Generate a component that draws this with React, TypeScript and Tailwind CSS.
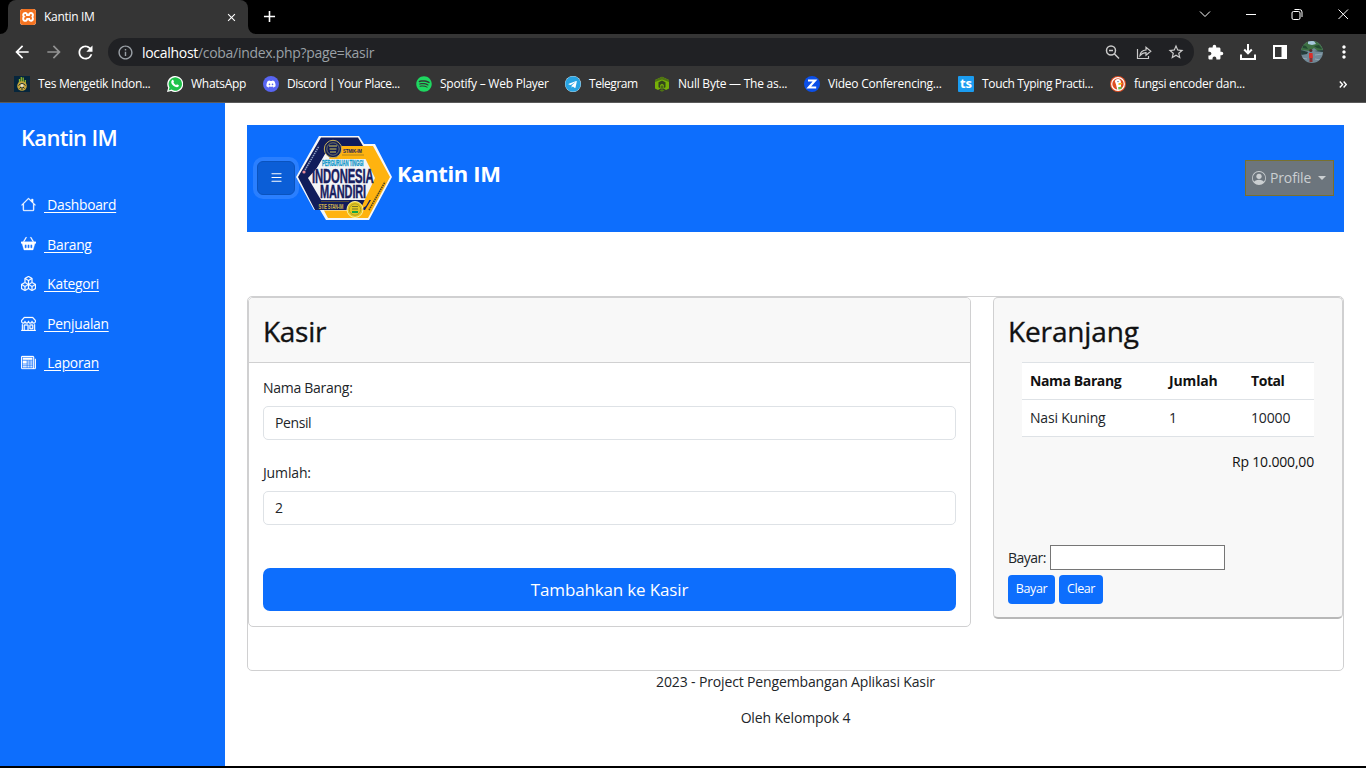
import React from "react";
import { BsHouse, BsBasket2Fill, BsBoxes, BsShop, BsNewspaper, BsPersonCircle, BsList } from "react-icons/bs";
import { MdArrowBack, MdArrowForward, MdRefresh, MdInfoOutline, MdStarBorder, MdExtension, MdMoreVert, MdClose, MdAdd } from "react-icons/md";
import { FaDiscord, FaSpotify, FaTelegram } from "react-icons/fa";
import { SiXampp } from "react-icons/si";

function WhatsAppIcon() {
  return (
    <svg viewBox="0 0 16 16" className="h-4 w-4 shrink-0">
      <path d="M0 16 1.2 11.8A8 8 0 1 1 4.2 14.9Z" fill="#fff" />
      <path d="M1.6 14.4 2.5 11.4A6.7 6.7 0 1 1 4.6 13.6Z" fill="#1fc24a" />
      <path d="M5.2 4.1c.4-.4.9-.4 1.1 0l.6 1.3c.1.3 0 .6-.5 1.2.6 1.2 1.5 2 2.7 2.6.6-.8.8-.9 1.1-.8l1.4.7c.4.2.3.9-.1 1.4-.7.8-1.9.9-3.3.3-2-.9-3.5-2.6-3.9-4.1-.2-1 .2-1.9.9-2.6z" fill="#fff" />
    </svg>
  );
}
function TypingIcon() {
  return (
    <svg viewBox="0 0 16 16" className="h-4 w-4 shrink-0">
      <rect width="16" height="16" fill="#06263c" />
      <path d="M5.500 3v5M7.300 1v6M9.200 1.500v6M11.300 4v4" stroke="#8bb52c" strokeWidth="1.300" />
      <circle cx="8" cy="10" r="4.800" fill="#c5a53a" />
      <path d="M4.500 9.500Q8 5.500 11.500 9.500M5.500 12.500 8 10l2.500 2.500M8 10v4" stroke="#16303a" fill="none" />
      <circle cx="8" cy="9.400" r="1.500" fill="#e8e4cf" />
    </svg>
  );
}
function NullByteIcon() {
  return (
    <svg viewBox="0 0 16 16" className="h-4 w-4 shrink-0">
      <path d="M8 .8 15 4v8.500L12 14 9.500 12.500h-3L4 14l-3-1.500V4Z" fill="#76b008" />
      <path d="M8 .8 15 4v2L8 3.500 1 6V4Z" fill="#4f7412" />
      <path d="M8 4.500 11.500 6.300v5L10 12V9L8 7.800 6 9v3l-1.500-.7v-5Z" fill="#33451c" />
      <path d="M6.500 9.500h3V12h-3z" fill="#4a6a18" />
      <path d="M5.500 14.500 8 13l2.500 1.500L8 15.800Z" fill="#4f7412" />
    </svg>
  );
}
function DuckIcon() {
  return (
    <svg viewBox="0 0 16 16" className="h-4 w-4 shrink-0">
      <circle cx="8" cy="8" r="8" fill="#de4d22" />
      <circle cx="8" cy="8" r="6.300" fill="#de4d22" stroke="#fff" strokeWidth="1.200" />
      <path d="M4.800 5Q6 2.500 8.500 3 11.300 3.800 11 7.500L11 13.500 7.300 14 6 8.500Z" fill="#fff" />
      <path d="M8.500 7.200q2-.8 4 0-1 2-4 1.800z" fill="#fdb813" />
      <path d="M8 11.300l3.500-.8v2.500l-3 .5z" fill="#65bc46" />
      <circle cx="8" cy="5.600" r=".7" fill="#2d4f8e" />
    </svg>
  );
}
function Bookmarks() {
  const item = "flex shrink-0 items-center whitespace-nowrap";
  return (
    <div className="flex h-[35px] items-center border-b border-[#5a5a5a] bg-[#353535] pl-[14px] pb-[2px] text-[12px] text-white">
      <div className={`${item} w-[153px] gap-2`}><TypingIcon /><span className="tracking-[-0.32px]">Tes Mengetik Indon...</span></div>
      <div className={`${item} w-[96px] gap-2`}><WhatsAppIcon /><span className="tracking-[-0.28px]">WhatsApp</span></div>
      <div className={`${item} w-[153px] gap-2`}>
        <span className="flex h-4 w-4 items-center justify-center rounded-full bg-[#5865f2]"><FaDiscord size={10} /></span>
        <span className="tracking-[-0.48px]">Discord | Your Place...</span>
      </div>
      <div className={`${item} w-[149px] gap-2`}><FaSpotify size={16} color="#1ed760" /><span className="tracking-[-0.24px]">Spotify – Web Player</span></div>
      <div className={`${item} w-[89px] gap-2`}>
        <span className="rounded-full bg-white"><FaTelegram size={16} color="#27a3e2" /></span><span className="tracking-[-0.45px]">Telegram</span>
      </div>
      <div className={`${item} w-[150px] gap-2`}><NullByteIcon /><span className="tracking-[-0.24px]">Null Byte — The as...</span></div>
      <div className={`${item} w-[154px] gap-2`}>
        <svg viewBox="0 0 16 16" className="h-4 w-4"><circle cx="8" cy="8" r="8" fill="#0b4fe8" /><path d="M4 4.500h7L4.800 11.500h7.400" fill="none" stroke="#fff" strokeWidth="2.200" /></svg>
        <span className="tracking-[-0.24px]">Video Conferencing...</span>
      </div>
      <div className={`${item} w-[152px] gap-2`}>
        <span className="flex h-4 w-4 items-center justify-center rounded-[1px] bg-[#1b9cf0] pb-px text-[13px] leading-none font-bold">ts</span>
        <span className="tracking-[-0.35px]">Touch Typing Practi...</span>
      </div>
      <div className={`${item} gap-2`}><DuckIcon /><span className="tracking-[-0.3px]">fungsi encoder dan...</span></div>
      <svg viewBox="0 0 8 7" className="mr-[19px] ml-auto h-[7px] w-2" fill="none" stroke="#fff" strokeWidth="1.400"><path d="M.8.6 3.500 3.500.8 6.400M4.600.6 7.300 3.500 4.600 6.400" /></svg>
    </div>
  );
}
function Browser() {
  return (
    <header className="h-[103px] shrink-0 bg-[#353535] text-white">
      <div className="flex h-[34px] bg-black">
        <svg viewBox="0 0 8 34" className="h-[34px] w-2"><path d="M8 26v8H0a8 8 0 0 0 8-8" fill="#353535" /></svg>
        <div className="flex w-[240px] items-center rounded-t-lg bg-[#353535] pl-3 text-[12px]">
          <span className="flex h-4 w-4 items-center justify-center overflow-hidden rounded-[3px] bg-white"><SiXampp size={16} color="#f47321" /></span>
          <span className="ml-2 tracking-[-0.3px]">Kantin IM</span>
          <MdClose size={13} className="mr-[10px] ml-auto" />
        </div>
        <svg viewBox="0 0 8 34" className="h-[34px] w-2"><path d="M0 26v8h8a8 8 0 0 1-8-8" fill="#353535" /></svg>
        <MdAdd size={19} className="mt-[7px] ml-1" />
        <svg viewBox="-10 0 170 34" className="ml-auto h-[34px] w-[170px]" fill="none" stroke="#fff" strokeWidth="1">
          <path d="m-6 11.500 5 5 5-5" />
          <path d="M40 14.500h10" />
          <path d="M87.500 11.500h5a1.500 1.500 0 0 1 1.500 1.500v5a1.500 1.500 0 0 1-1.500 1.500h-5A1.500 1.500 0 0 1 86 18v-5a1.500 1.500 0 0 1 1.500-1.500M88.500 9.500h5a2.500 2.500 0 0 1 2.500 2.500v5" />
          <path d="m132.500 9.500 9.500 9.500m0-9.500-9.500 9.500" />
        </svg>
      </div>
      <div className="flex h-[34px] items-center pt-0.5">
        <MdArrowBack size={20} className="ml-3" />
        <MdArrowForward size={20} className="ml-3 text-[#929292]" />
        <MdRefresh size={21} className="ml-[11px]" />
        <div className="ml-3 flex h-7 w-[1086px] items-center rounded-full bg-[#202124] pl-[9px] text-[14px] text-[#9aa0a6]">
          <MdInfoOutline size={17} />
          <span className="ml-2 tracking-[-0.3px]"><span className="text-white">localhost</span>/coba/index.php?page=kasir</span>
          <div className="mr-[9px] ml-auto flex items-center gap-[15px] text-[#cbcbcb]">
            <svg viewBox="0 0 16 16" className="h-4 w-4" fill="none" stroke="currentColor" strokeWidth="1.500"><circle cx="6" cy="6.500" r="4.500" /><path d="M9.300 9.800l4.700 4.700M4 6.500h4" /></svg>
            <svg viewBox="0 0 16 16" className="h-4 w-4" fill="none" stroke="currentColor" strokeWidth="1.200"><path d="M1.500 5v9.500h11V12M4 11.500q.5-5 6-5.500V3.200l4.800 4-4.800 4V8.600Q6.500 8.500 4 11.500Z" /></svg>
            <MdStarBorder size={18} />
          </div>
        </div>
        <MdExtension size={17} className="ml-[13px]" />
        <svg viewBox="0 0 16 16" className="ml-4 h-4 w-4" fill="none" stroke="#fff" strokeWidth="2"><path d="M8 0v9M4.200 5.500 8 9.300l3.800-3.800M1 10.500V15h14v-4.500" /></svg>
        <svg viewBox="0 0 14 14" className="ml-[17px] h-[14px] w-[14px]"><path d="M0 0h14v14H0z" fill="#fff" /><path d="M2 2h6.500v10H2z" fill="#353535" /></svg>
        <svg viewBox="0 0 22 22" className="ml-[14px] h-[22px] w-[22px]">
          <defs><clipPath id="avatar"><circle cx="11" cy="11" r="11" /></clipPath></defs>
          <g clipPath="url(#avatar)">
            <path d="M0 0h22v22H0z" fill="#718997" />
            <path d="M0 0h22v9l-5 1-4-3-4 3-9-1z" fill="#3e7043" />
            <path d="M7 0h6l2 3-4 1-4-1z" fill="#a7c8dc" />
            <path d="M1 4l4 1 2 3-5-1zM13 5l5-1 3 4-5-1z" fill="#234a32" />
            <path d="M0 9l7 2-1 2-6 1zM13 10l9-1v2z" fill="#253c3a" />
            <path d="M8 12h3.500l.5 5H8z" fill="#d92f2a" /><path d="M8.500 17h3v4h-3z" fill="#8a3032" />
            <circle cx="9.800" cy="9.500" r="1.600" fill="#4b2f2c" />
            <path d="M14 14l7-1M1 17l5 1M14 18l5 1" stroke="#93a8b4" />
          </g>
        </svg>
        <MdMoreVert size={20} className="ml-[11px]" />
      </div>
      <Bookmarks />
    </header>
  );
}
function Logo() {
  return (
    <svg viewBox="0 0 100 90" className="h-[90px] w-[100px]">
      <path d="M25 4H65L70 12H81L98 45 75 88H32L26 78H20L2 45Z" fill="#f6f7f8" />
      <path d="M27 5.500H64L69 14H43L38 22H31L17 46 28 68H80L76 78H21L4 45Z" fill="#101c5b" />
      <path d="M44 14H79L96 45 74 86H34L30 78.500H61L70 77 86 46 74 27H35L39 19Z" fill="#ffb30f" />
      <path d="M31 27H71L83 46 71 68H27L14 46Z" fill="#f3f4f6" />
      <path d="M27 68H77L71 78H25Z" fill="#101c5b" />
      <path d="M71 26H76L88 46 72 74 66 78 81 46Z" fill="#ffb30f" />
      <path d="M48 23H70M27 69.500H55" stroke="#7e6a25" strokeWidth=".6" />
      <circle cx="39" cy="17" r="8.700" fill="#111e58" stroke="#c9b257" strokeWidth="1" />
      <circle cx="39" cy="17" r="6.200" fill="none" stroke="#8f8a60" strokeWidth=".8" />
      <path d="M35 14h8M35.500 17h7M36 20h6" stroke="#d9c85b" strokeWidth="1" />
      <g fontFamily="'Liberation Sans', sans-serif" fontWeight="700">
        <text transform="translate(49 21) scale(1 1.4)" fontSize="4.400" fill="#17205a">STMIK-IM</text>
        <text transform="translate(28 34) scale(1 1.9)" fontSize="4.300" fill="#1598c9" stroke="#1598c9" strokeWidth=".15">PERGURUAN TINGGI</text>
        <text transform="translate(18 51) scale(1 1.8)" fontSize="11.300" fill="#18205f" stroke="#18205f" strokeWidth=".25">INDONESIA</text>
        <text transform="translate(26 66) scale(1 1.6)" fontSize="11" fill="#18205f" stroke="#18205f" strokeWidth=".25">MANDIRI</text>
        <text transform="translate(24.500 76.500) scale(1 1.85)" fontSize="4" fill="#d6b84c">STIE STAN-IM</text>
      </g>
      <circle cx="61" cy="77.500" r="8" fill="#e6c920" stroke="#fff0a0" strokeWidth="1" />
      <circle cx="61" cy="77.500" r="5.700" fill="none" stroke="#a28b25" strokeWidth=".8" />
      <path d="M58 74.500h6M58 77h6" stroke="#77742a" strokeWidth="1.200" /><path d="M58 80h6" stroke="#16a446" strokeWidth="2" />
      <path d="M11 38 25 14" stroke="#8fa0c4" strokeWidth="1.500" strokeDasharray="1.500 .8" /><circle cx="10" cy="40" r="1.600" fill="#e68c9a" />
      <path d="M75 78 91 50" stroke="#4e4521" strokeWidth="1.600" strokeDasharray="1.500 .8" />
    </svg>
  );
}
const menu = [
  { label: "Dashboard", Icon: BsHouse },
  { label: "Barang", Icon: BsBasket2Fill },
  { label: "Kategori", Icon: BsBoxes },
  { label: "Penjualan", Icon: BsShop },
  { label: "Laporan", Icon: BsNewspaper },
];
export default function App() {
  return (
    <div className="flex h-[768px] w-[1366px] flex-col overflow-hidden border-b-2 border-black bg-white font-['Open_Sans','Noto_Sans',sans-serif] text-[14px] tracking-[-0.14px] text-[#212529]">
      <Browser />
      <div className="flex min-h-0 flex-1">
        <aside className="w-[225px] shrink-0 bg-[#0d6efd] pl-[21px] text-white">
          <h1 className="mt-[18px] text-[22px] leading-[33px] font-semibold tracking-[-0.7px]">Kantin IM</h1>
          <nav className="mt-[31px]">
            {menu.map(({ label, Icon }) => (
              <a key={label} className="flex h-[39.600px] items-center"><Icon size={15} strokeWidth={0.3} className="mb-px" /><span className="mt-px ml-2 text-[13.800px] tracking-[-0.26px] whitespace-pre underline underline-offset-2">{" " + label}</span></a>
            ))}
          </nav>
        </aside>
        <main className="flex flex-1 flex-col px-[22px] pt-[22px]">
          <div className="flex h-[107px] shrink-0 items-center bg-[#0d6efd] pb-[3px] text-white">
            <button className="mt-px ml-[10px] flex h-[34px] w-[38px] items-center justify-center rounded-md border border-[#0a53be] bg-[#0b5ed7] shadow-[0_0_0_4px_#2a7fff]"><BsList size={15} /></button>
            <div className="-ml-px"><Logo /></div>
            <span className="mb-[8px] ml-[3px] text-[22px] font-bold tracking-[-0.35px]">Kantin IM</span>
            <button className="mt-px mr-[10px] ml-auto flex h-9 w-[89px] items-center border border-[#78702d] bg-[#6c757d] pl-[6px] text-[#cbcfd2]"><BsPersonCircle size={14} /><span className="ml-1">Profile</span><span className="ml-[7px] border-x-4 border-t-4 border-x-transparent border-t-current" /></button>
          </div>
          <div className="mt-16 flex h-[375px] shrink-0 items-start justify-between rounded-[5px] border border-[#d0d0d1]">
            <section className="h-[330px] w-[723px] rounded-[5px] border border-[#d0d0d1]">
              <div className="flex h-[65px] items-center rounded-t-[4px] border-b border-[#d0d0d1] bg-[#f8f8f8] px-[14px] pt-[2px]"><h2 className="text-[28px] font-medium tracking-[-0.3px] text-[#111] [-webkit-text-stroke:0.35px_#111]">Kasir</h2></div>
              <div className="px-[14px] pt-[14px]">
                <label className="block h-[29px] leading-[22px] tracking-[-0.28px]">Nama Barang:</label>
                <div className="flex h-[34px] items-center rounded-[5px] border border-[#dee2e6] px-[11px] pb-px tracking-[-0.4px]">Pensil</div>
                <label className="mt-[22px] block h-[29px] leading-[22px]">Jumlah:</label>
                <div className="flex h-[34px] items-center rounded-[5px] border border-[#dee2e6] px-[11px] pb-px">2</div>
                <button className="mt-[43px] h-[43px] w-full rounded-[7px] bg-[#0d6efd] text-[17px] tracking-[-0.15px] text-white"><span>Tambahkan ke Kasir</span></button>
              </div>
            </section>
            <section className="h-[322px] w-[350px] rounded-[5px] border border-b-2 border-[#d0d0d1] border-b-[#b8b8b8] bg-[#f8f8f8] px-[14px]">
              <h2 className="h-[64px] pt-[12px] text-[28px] leading-[42px] font-medium text-[#111] [-webkit-text-stroke:0.35px_#111]">Keranjang</h2>
              <table className="ml-[14px] w-[292px] table-fixed border-collapse bg-white text-left">
                <thead><tr className="h-[37px] border-y border-[#dee2e6] text-[#111]"><th className="w-[139px] pb-0.5 pl-2 tracking-[-0.38px]">Nama Barang</th><th className="w-[83px] pb-0.5 pl-2">Jumlah</th><th className="pb-0.5 pl-[7px] tracking-[-0.45px]">Total</th></tr></thead>
                <tbody><tr className="h-[37px] border-b border-[#dee2e6]"><td className="pb-0.5 pl-2 tracking-[-0.2px]">Nasi Kuning</td><td className="pb-0.5 pl-2">1</td><td className="pb-0.5 pl-[7px]">10000</td></tr></tbody>
              </table>
              <p className="mt-[14px] mr-[14px] text-right leading-[22px] tracking-[-0.18px] text-[#111]">Rp 10.000,00</p>
              <div className="mt-[72px] flex h-[25px] items-center"><label className="w-[42px] tracking-[-0.5px] whitespace-nowrap">Bayar:</label><input className="h-[25px] w-[175px] border border-[#767676] bg-white" /></div>
              <div className="mt-[5px] flex gap-1 text-[12.500px] tracking-[-0.4px] text-white"><button className="h-[29px] w-[47px] rounded bg-[#0d6efd]">Bayar</button><button className="h-[29px] w-11 rounded bg-[#0d6efd]">Clear</button></div>
            </section>
          </div>
          <footer className="text-center leading-[22px]"><p>2023 - Project Pengembangan Aplikasi Kasir</p><p className="mt-[14px]">Oleh Kelompok 4</p></footer>
        </main>
      </div>
    </div>
  );
}
